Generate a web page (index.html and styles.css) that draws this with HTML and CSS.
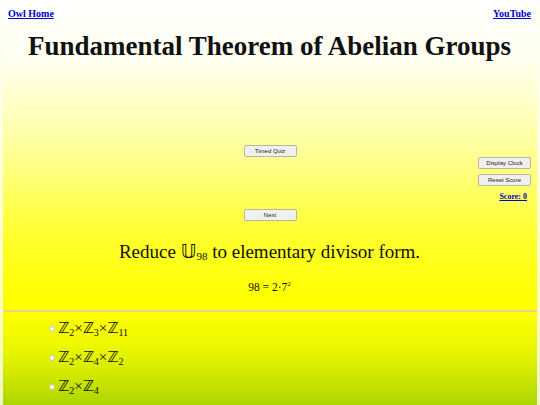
FILE: index.html
```html
<!DOCTYPE html>
<html>
<head>
<meta charset="utf-8">
<link rel="stylesheet" href="styles.css">
</head>
<body>
<div class="page">
  <div class="top">
    <div class="links">
      <a href="#">Owl Home</a>
      <a href="#">YouTube</a>
    </div>
    <h1 class="title">Fundamental Theorem of Abelian Groups</h1>
    <div class="controls">
      <div class="side"></div>
      <div class="center">
        <button class="btn">Timed Quiz</button>
        <button class="btn">Next</button>
      </div>
      <div class="side right">
        <button class="btn">Display Clock</button>
        <button class="btn">Reset Score</button>
        <a href="#" class="score">Score: 0</a>
      </div>
    </div>
    <p class="question">Reduce <span class="ds">𝕌</span><sub>98</sub> to elementary divisor form.</p>
    <p class="hint">98 = 2·7<sup>2</sup></p>
  </div>
  <hr class="rule">
  <div class="answers">
    <label class="opt"><span class="radio"></span><span class="math"><span class="ds">ℤ</span><sub>2</sub>×<span class="ds">ℤ</span><sub>3</sub>×<span class="ds">ℤ</span><sub>11</sub></span></label>
    <label class="opt"><span class="radio"></span><span class="math"><span class="ds">ℤ</span><sub>2</sub>×<span class="ds">ℤ</span><sub>4</sub>×<span class="ds">ℤ</span><sub>2</sub></span></label>
    <label class="opt"><span class="radio"></span><span class="math"><span class="ds">ℤ</span><sub>2</sub>×<span class="ds">ℤ</span><sub>4</sub></span></label>
  </div>
</div>
</body>
</html>
```

FILE: styles.css
```css
html, body {
  margin: 0;
  padding: 0;
  height: 100%;
}
body {
  background: linear-gradient(to bottom, #fffff8 0px, #ffffc0 300px, #eef5c8 405px);
  padding: 0 3px;
  box-sizing: border-box;
  font-family: "Liberation Serif", "DejaVu Serif", serif;
  color: #111;
  overflow: hidden;
}
.page {
  height: 100%;
  display: flex;
  flex-direction: column;
}
.top {
  background: linear-gradient(to bottom, #ffffff 0px, #fffff0 60px, #ffff99 150px, #ffff33 230px, #ffff00 300px);
  padding: 8px 6px 0 5px;
  height: 310px;
  box-sizing: border-box;
}
.links {
  display: flex;
  justify-content: space-between;
  font-size: 10px;
  font-weight: bold;
  line-height: 12px;
}
.links a, .score {
  color: #0000cc;
}
.title {
  margin: 10px 0 0;
  text-align: center;
  font-size: 27px;
  line-height: 32px;
  font-weight: bold;
}
.controls {
  display: grid;
  grid-template-columns: 1fr 52px 1fr;
  margin-top: 83px;
}
.center {
  display: flex;
  flex-direction: column;
  justify-content: space-between;
  height: 76px;
}
.right {
  display: flex;
  flex-direction: column;
  align-items: flex-end;
  padding-top: 12px;
  gap: 5px;
}
.btn {
  width: 53px;
  height: 12px;
  padding: 0;
  font-family: "Liberation Sans", Arial, sans-serif;
  font-size: 6px;
  color: #222;
  background: #f0f0f0;
  border: 1px solid #b8b8a0;
  border-radius: 2px;
}
.score {
  font-size: 8px;
  font-weight: bold;
  margin-right: 4px;
  margin-top: 1px;
}
.question {
  margin: 18px 0 0;
  text-align: center;
  font-size: 19px;
  line-height: 24px;
}
.question sub {
  font-size: 11px;
  vertical-align: -2px;
  line-height: 0;
}
.ds {
  font-family: "DejaVu Sans", "DejaVu Serif", serif;
}
.hint {
  margin: 17px 0 0;
  text-align: center;
  font-size: 11.5px;
}
.hint sup {
  font-size: 7px;
  line-height: 0;
}
.rule {
  margin: 0;
  height: 2px;
  border: 0;
  background: #e2d889;
}
.answers {
  flex: 1;
  background: linear-gradient(to bottom, #ffff00 0px, #e8f500 40px, #c8e400 70px, #aad400 95px);
  display: flex;
  flex-direction: column;
  padding: 8px 0 0 46px;
  gap: 12px;
}
.opt {
  display: flex;
  align-items: center;
  height: 17px;
}
.math {
  font-size: 15px;
  line-height: 17px;
}
.math sub {
  font-size: 10px;
  vertical-align: -3px;
  line-height: 0;
}
.radio {
  width: 4px;
  height: 4px;
  border-radius: 50%;
  background: #fff;
  border: 1px solid #c8c8a0;
  margin-right: 3px;
}
```
